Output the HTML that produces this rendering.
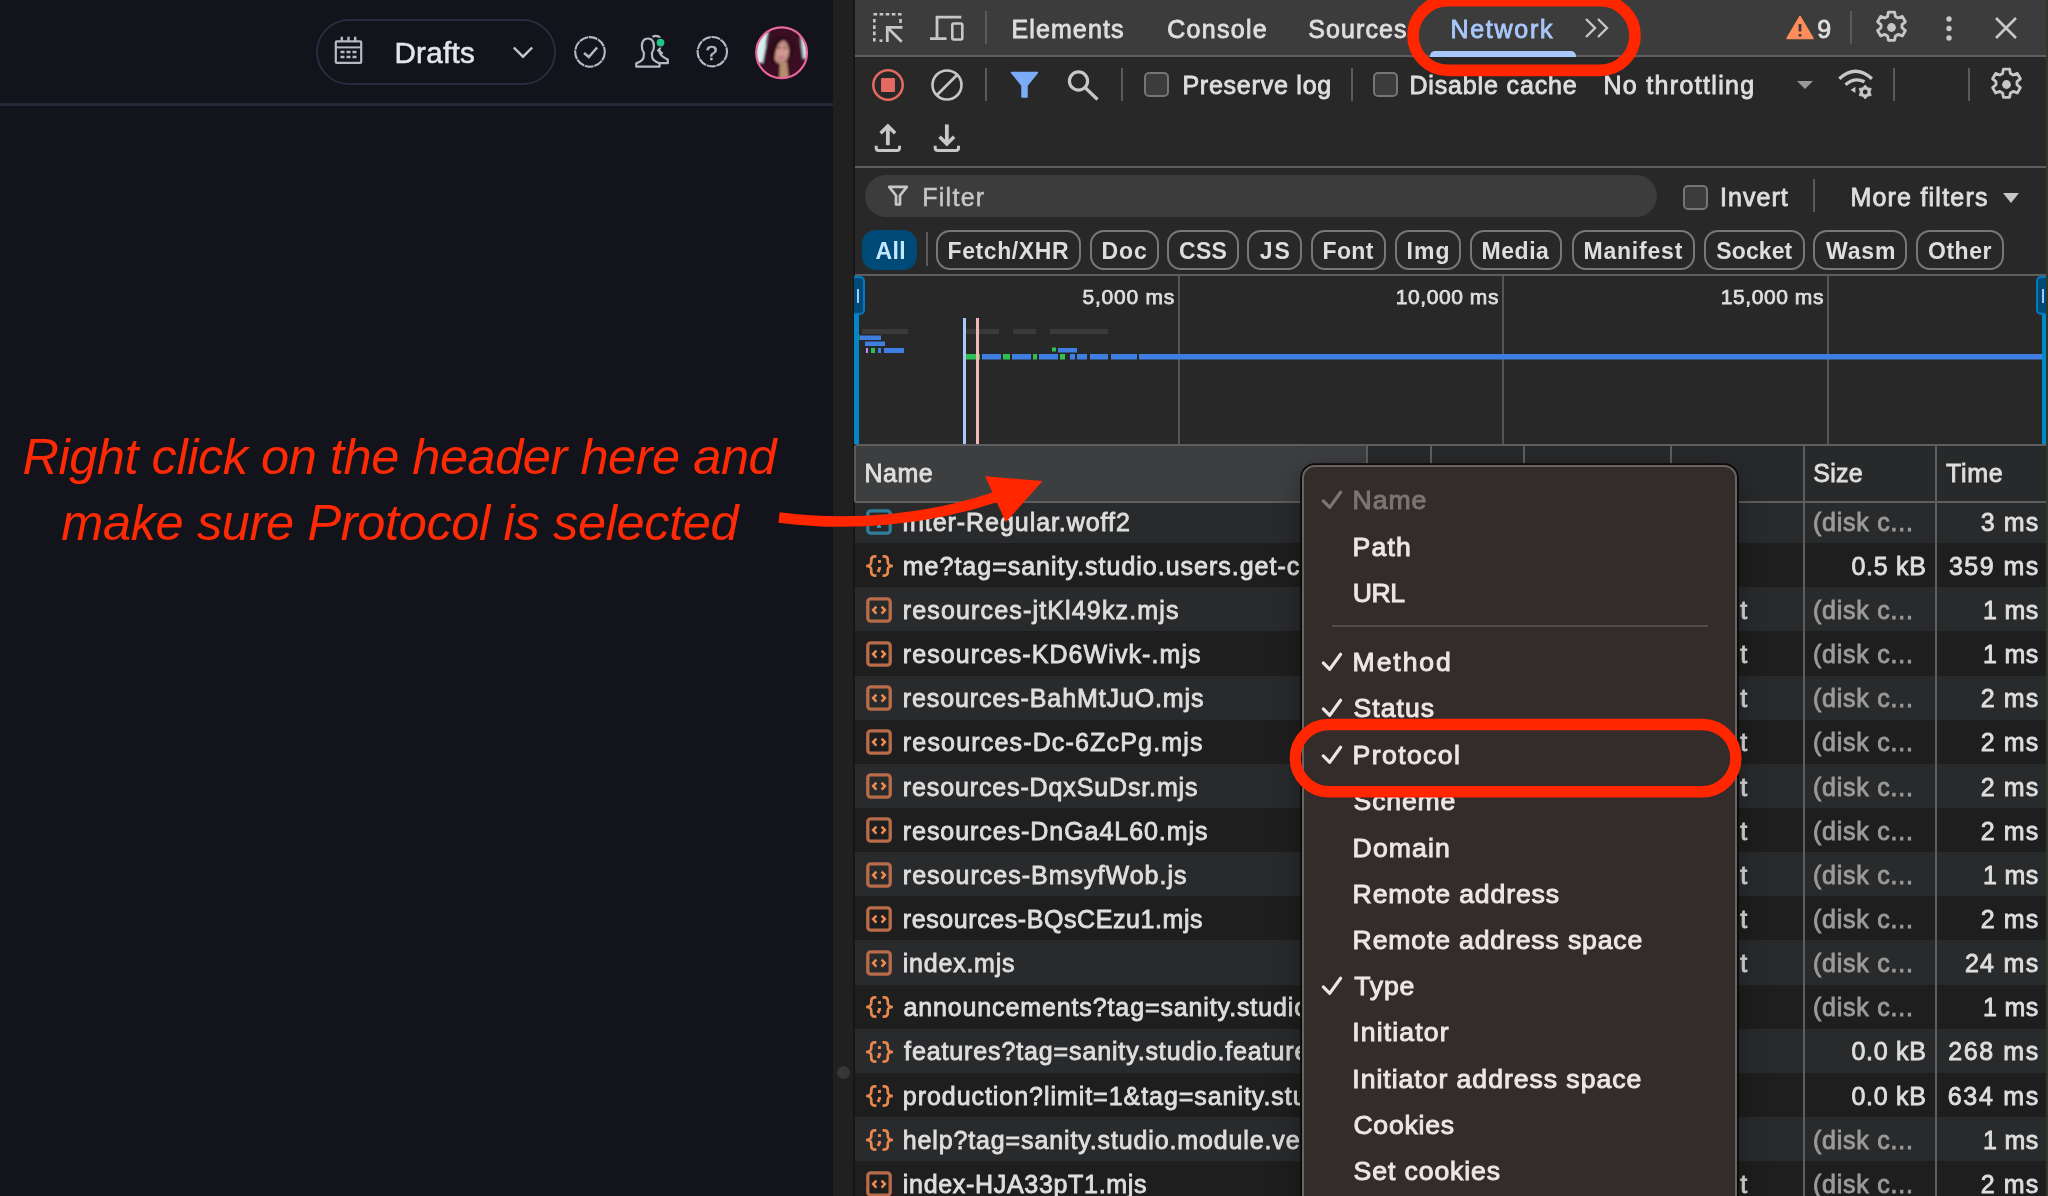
<!DOCTYPE html>
<html lang="en"><head><meta charset="utf-8"><title>Network panel - Protocol column</title>
<style>
html,body{margin:0;padding:0;background:#13141b;}
body{width:2048px;height:1196px;position:relative;overflow:hidden;font-family:"Liberation Sans",sans-serif;-webkit-font-smoothing:antialiased;}
.t{position:absolute;white-space:nowrap;}
.a{position:absolute;}
svg{position:absolute;overflow:visible;}
#root{position:absolute;left:0;top:0;width:2048px;height:1196px;will-change:transform;}

</style></head><body>
<div id="root">
<div class="a" id="page" style="left:0;top:0;width:833px;height:1196px;background:#13141b"></div>
<div class="a" style="left:0;top:103px;width:833px;height:3px;background:#26283a"></div>
<div class="a" style="left:316px;top:19px;width:236px;height:62px;border:2px solid #282c3f;border-radius:34px"></div>
<svg style="left:333px;top:35px" width="31" height="31" viewBox="0 0 31 31" fill="none" stroke="#b6b8c6" stroke-width="2.200">
<rect x="2.800" y="6.300" width="25.400" height="21.600" rx="1"/><path d="M2.800 12.400h25.400" stroke-width="2"/><path d="M8.800 1.800v5M15.500 1.800v5M22.200 1.800v5" stroke-width="2.400"/>
<path d="M7.500 17h16" stroke-width="2.400" stroke-dasharray="4 2"/><path d="M7.500 22h16" stroke-width="2.400" stroke-dasharray="4 2"/></svg>
<span class="t " style="left:394.4px;top:31.8px;font-size:29.5px;line-height:41px;color:#e4e5ec;letter-spacing:0.352px;-webkit-text-stroke:0.550px;">Drafts</span>
<svg style="left:511px;top:44px" width="24" height="16" viewBox="0 0 24 16" fill="none" stroke="#c4c5cf" stroke-width="2.400"><path d="M2.800 3.500l9.200 9.200 9.200-9.200"/></svg>
<svg style="left:573px;top:35px" width="34" height="34" viewBox="0 0 34 34" fill="none" stroke="#b6b8c6" stroke-width="2.100">
<circle cx="17" cy="16.900" r="14.800" stroke-dasharray="9 0.700"/><path d="M11 18l4.800 4 8.300-9.500" stroke-width="2.500"/></svg>
<svg style="left:630px;top:30px" width="44" height="44" viewBox="0 0 44 44" fill="none" stroke="#b6b8c6" stroke-width="2.200" stroke-linejoin="round">
<path d="M6.200 36.600h23.400v-3.200c-5-1.800-7.600-3.600-7.600-7.400v-3.500c1.300-1.300 1.900-3.400 1.900-6.200c0-5.200-2.100-7.800-6-7.800s-6 2.600-6 7.800c0 2.800.6 4.900 1.900 6.200v3.500c0 3.800-2.600 5.600-7.600 7.400z"/>
<path d="M22.500 6.800c1-.7 2.100-1 3.300-1c3.500 0 5.500 2.600 5.500 7.300c0 2.700-.7 4.800-1.900 6.300l.2 2.800c1 3.400 3.700 5.300 8.200 7.200v3.800h-8"/>
<path d="M27.500 19.500l5 4.500" stroke-width="2.600"/>
<circle cx="30.500" cy="12.600" r="4.500" fill="#20c486" stroke="#13141b" stroke-width="1.200"/></svg>
<svg style="left:695px;top:35px" width="34" height="34" viewBox="0 0 34 34" fill="none" stroke="#b6b8c6" stroke-width="2.100">
<circle cx="17.300" cy="16.700" r="14.700" stroke-dasharray="9 0.700"/></svg>
<span class="t " style="left:705.7px;top:37.7px;font-size:21px;line-height:29px;color:#b6b8c6;-webkit-text-stroke:0.5px;">?</span>
<svg style="left:754px;top:25px" width="56" height="56" viewBox="0 0 56 56">
<defs><clipPath id="av"><circle cx="27.600" cy="27.800" r="25"/></clipPath>
<linearGradient id="sk" x1="0" y1="0" x2="0" y2="1"><stop offset="0" stop-color="#b58079"/><stop offset="0.550" stop-color="#d29c90"/><stop offset="1" stop-color="#b5857a"/></linearGradient>
<filter id="bl" x="-20%" y="-20%" width="140%" height="140%"><feGaussianBlur stdDeviation="1.100"/></filter></defs>
<g clip-path="url(#av)"><rect width="56" height="56" fill="#35101f"/><g filter="url(#bl)">
<path d="M0 6h15l-2.500 10l-1.500 14l-2 8H0z" fill="#d5eef0"/><path d="M46 10h10v24h-7l-1.500-12z" fill="#c4e3e6"/>
<path d="M10 56c-3-14 0-30 5-42c3-8 18-12 26-4c8 8 8 30 6 46z" fill="#3a1123"/>
<ellipse cx="26.800" cy="26.500" rx="8.200" ry="12.300" fill="url(#sk)"/>
<path d="M16 22c1-10 12-13 21-8c-5 0-10 1-12.500 5c-3 5-4 12-4.500 24c-3.500-7-5-14-4-21z" fill="#2c0b19"/>
<path d="M35 17c3 4 3.500 12 .5 22c4.500-4 6.500-15 3.500-23z" fill="#2c0b19"/>
<path d="M23.500 23h3M29.500 23h3" stroke="#6a4a55" stroke-width="1.600"/>
<path d="M24.500 32.500h5.500" stroke="#c96f7c" stroke-width="2.200"/>
<path d="M26 38l7-1l2 20H25z" fill="#b88c6e"/></g>
</g><circle cx="27.600" cy="27.800" r="25.400" fill="none" stroke="#e8679b" stroke-width="2.200"/></svg>
<span class="t " style="left:22.4px;top:422.1px;font-size:50.5px;line-height:70px;color:#ff2a05;letter-spacing:-0.454px;font-style:italic;">Right click on the header here and</span>
<span class="t " style="left:61.2px;top:488.1px;font-size:50.5px;line-height:70px;color:#ff2a05;letter-spacing:-0.351px;font-style:italic;">make sure Protocol is selected</span>
<div class="a" style="left:833px;top:0;width:20px;height:1196px;background:#202020"></div>
<div class="a" style="left:853px;top:0;width:2px;height:1196px;background:#161616"></div>
<div class="a" style="left:837px;top:1066px;width:13px;height:13px;border-radius:7px;background:#363636"></div>
<div class="a" id="dt" style="left:855px;top:0;width:1193px;height:1196px;background:#282828"></div>
<div class="a" style="left:855px;top:0;width:1193px;height:55px;background:#3c3c3c"></div>
<div class="a" style="left:855px;top:55px;width:1193px;height:2px;background:#5e5e5e"></div>
<svg style="left:872px;top:12px" width="32" height="32" viewBox="0 0 32 32" fill="none" stroke="#c7c7c7" stroke-width="2.600">
<path d="M1.500 2.300h28" stroke-dasharray="3.600 2.500"/><path d="M2.300 7v23" stroke-dasharray="3.600 2.700"/><path d="M28.500 7v4" /><path d="M7.500 28.700h3"/>
<path d="M15.300 30V15.300H30.400M16 16l13.700 13.700" stroke-width="2.800"/></svg>
<svg style="left:929px;top:14px" width="36" height="28" viewBox="0 0 36 28" fill="none" stroke="#c7c7c7" stroke-width="2.600">
<path d="M32.300 3.200H8v21M1 24.600h16.500" stroke-width="2.800"/><rect x="23.300" y="9.500" width="10" height="16" rx="1.500"/></svg>
<div class="a" style="left:985px;top:11px;width:2px;height:33px;background:#5a5a5a"></div>
<span class="t " style="left:1011.4px;top:12.3px;font-size:25px;line-height:35px;color:#dedede;letter-spacing:1.128px;-webkit-text-stroke:0.85px;">Elements</span>
<span class="t " style="left:1167.2px;top:12.3px;font-size:25px;line-height:35px;color:#dedede;letter-spacing:1.301px;-webkit-text-stroke:0.85px;">Console</span>
<span class="t " style="left:1308.3px;top:12.3px;font-size:25px;line-height:35px;color:#dedede;letter-spacing:1.080px;-webkit-text-stroke:0.85px;">Sources</span>
<span class="t " style="left:1450.4px;top:12.3px;font-size:25px;line-height:35px;color:#a8c7fa;letter-spacing:1.746px;-webkit-text-stroke:0.85px;">Network</span>
<div class="a" style="left:1430px;top:51px;width:146px;height:6px;background:#a8c7fa;border-radius:5px 5px 0 0"></div>
<svg style="left:1584px;top:17px" width="26" height="22" viewBox="0 0 26 22" fill="none" stroke="#c7c7c7" stroke-width="2.400"><path d="M2 2l9 9-9 9M14 2l9 9-9 9"/></svg>
<svg style="left:1786px;top:15px" width="28" height="25" viewBox="0 0 28 25"><path d="M14 1.500L27 23.500H1z" fill="#ff8d5b" stroke="#ff8d5b" stroke-width="1.500" stroke-linejoin="round"/><path d="M14 9v7.500M14 19v2.500" stroke="#3c3c3c" stroke-width="2.800"/></svg>
<span class="t " style="left:1817.3px;top:12.3px;font-size:25px;line-height:35px;color:#dedede;-webkit-text-stroke:0.85px;">9</span>
<div class="a" style="left:1850px;top:11px;width:2px;height:33px;background:#5a5a5a"></div>
<svg style="left:1871.5px;top:8.3px" width="39" height="39" viewBox="0 0 24 24" fill="none" stroke="#c7c7c7" stroke-width="1.750" stroke-linejoin="round">
<path d="M10.100 2.500h3.800l.5 2.700 1.700.95 2.550-.95 1.900 3.300-2.100 1.750v1.900l2.100 1.750-1.900 3.300-2.550-.95-1.700.95-.5 2.700h-3.800l-.5-2.700-1.700-.95-2.550.95-1.900-3.300 2.100-1.750v-1.900l-2.100-1.750 1.900-3.300 2.550.95 1.700-.95z"/><circle cx="12" cy="12" r="2.700" fill="#c7c7c7" stroke="none"/></svg>
<svg style="left:1944px;top:14px" width="10" height="30" viewBox="0 0 10 30" fill="#c7c7c7"><circle cx="5" cy="5" r="2.700"/><circle cx="5" cy="14.500" r="2.700"/><circle cx="5" cy="24" r="2.700"/></svg>
<svg style="left:1994px;top:16px" width="24" height="24" viewBox="0 0 24 24" fill="none" stroke="#c7c7c7" stroke-width="2.600"><path d="M2 2l20 20M22 2L2 22"/></svg>
<svg style="left:871px;top:68px" width="34" height="34" viewBox="0 0 34 34"><circle cx="17" cy="17" r="14.700" fill="none" stroke="#e46962" stroke-width="2.600"/><rect x="10" y="10" width="14" height="14" rx="1" fill="#e46962"/></svg>
<svg style="left:930px;top:68px" width="34" height="34" viewBox="0 0 34 34" fill="none" stroke="#c7c7c7" stroke-width="2.600"><circle cx="17" cy="17" r="14.500"/><path d="M7 27L27 7"/></svg>
<div class="a" style="left:985px;top:68px;width:2px;height:33px;background:#5a5a5a"></div>
<svg style="left:1010px;top:71px" width="29" height="28" viewBox="0 0 29 28"><path d="M1.500 1.500h26l-10.500 13v11.500h-5v-11.500z" fill="#7cacf8" stroke="#7cacf8" stroke-width="1.500" stroke-linejoin="round"/></svg>
<svg style="left:1066px;top:69px" width="34" height="32" viewBox="0 0 34 32" fill="none" stroke="#c7c7c7" stroke-width="3.200"><circle cx="12.500" cy="12" r="9.100"/><path d="M19.500 19l12 11.500"/></svg>
<div class="a" style="left:1121px;top:68px;width:2px;height:33px;background:#5a5a5a"></div>
<div class="a" style="left:1144px;top:72px;width:21px;height:21px;border:2px solid #757575;border-radius:5px;background:#3c3c3c"></div>
<span class="t " style="left:1182.4px;top:68.3px;font-size:25px;line-height:35px;color:#dedede;letter-spacing:0.770px;-webkit-text-stroke:0.85px;">Preserve log</span>
<div class="a" style="left:1351px;top:68px;width:2px;height:33px;background:#5a5a5a"></div>
<div class="a" style="left:1373px;top:72px;width:21px;height:21px;border:2px solid #757575;border-radius:5px;background:#3c3c3c"></div>
<span class="t " style="left:1409.4px;top:68.3px;font-size:25px;line-height:35px;color:#dedede;letter-spacing:0.857px;-webkit-text-stroke:0.85px;">Disable cache</span>
<span class="t " style="left:1603.4px;top:68.3px;font-size:25px;line-height:35px;color:#dedede;letter-spacing:1.336px;-webkit-text-stroke:0.85px;">No throttling</span>
<svg style="left:1796px;top:80px" width="18" height="10" viewBox="0 0 18 10"><path d="M1 1h16l-8 8z" fill="#9a9a9a"/></svg>
<svg style="left:1837px;top:67px" width="38" height="34" viewBox="0 0 38 34" fill="none" stroke="#c7c7c7" stroke-width="3.200">
<path d="M2.300 11.800Q18.600 -3.200 34.900 11.800"/><path d="M8.500 17.800Q17.500 9.800 27.500 14.800"/>
<path d="M13.600 22.900l4.800-3.100v6.200z" fill="#c7c7c7" stroke="none"/>
<path d="M28.20 18.00L30.65 20.76L34.26 21.50L33.10 25.00L34.26 28.50L30.65 29.24L28.20 32.00L25.75 29.24L22.14 28.50L23.30 25.00L22.14 21.50L25.75 20.76Z" fill="#c7c7c7" stroke="#c7c7c7" stroke-width="0.800" stroke-linejoin="round"/><circle cx="28.2" cy="25.0" r="2.400" fill="#282828" stroke="none"/></svg>
<div class="a" style="left:1893px;top:68px;width:2px;height:33px;background:#5a5a5a"></div>
<div class="a" style="left:1968px;top:68px;width:2px;height:33px;background:#5a5a5a"></div>
<svg style="left:1987.0px;top:65.3px" width="39" height="39" viewBox="0 0 24 24" fill="none" stroke="#c7c7c7" stroke-width="1.750" stroke-linejoin="round">
<path d="M10.100 2.500h3.800l.5 2.700 1.700.95 2.550-.95 1.900 3.300-2.100 1.750v1.900l2.100 1.750-1.900 3.300-2.550-.95-1.700.95-.5 2.700h-3.800l-.5-2.700-1.700-.95-2.550.95-1.900-3.300 2.100-1.750v-1.900l-2.100-1.750 1.900-3.300 2.550.95 1.700-.95z"/><circle cx="12" cy="12" r="2.700" fill="#c7c7c7" stroke="none"/></svg>
<svg style="left:873px;top:122px" width="30" height="32" viewBox="0 0 30 32" fill="none" stroke="#c7c7c7" stroke-width="3"><path d="M3.200 23.700v2.200q0 2.500 2.500 2.500h18.300q2.500 0 2.500-2.500v-2.200"/><path d="M14.850 23.200V5.500" stroke-width="3.800"/><path d="M7.600 11.300l7.250-7.250 7.250 7.250" stroke-width="3.600"/></svg>
<svg style="left:932px;top:122px" width="30" height="32" viewBox="0 0 30 32" fill="none" stroke="#c7c7c7" stroke-width="3"><path d="M3.200 23.700v2.200q0 2.500 2.500 2.500h18.300q2.500 0 2.500-2.500v-2.200"/><path d="M14.850 2.400V20.500" stroke-width="3.800"/><path d="M7.600 14.700l7.250 7.250 7.250-7.250" stroke-width="3.600"/></svg>
<div class="a" style="left:855px;top:166px;width:1193px;height:2px;background:#5e5e5e"></div>
<div class="a" style="left:865px;top:175px;width:792px;height:42px;border-radius:21px;background:#3c3c3c"></div>
<svg style="left:887px;top:184px" width="22" height="23" viewBox="0 0 22 23" fill="none" stroke="#c7c7c7" stroke-width="2.700" stroke-linejoin="round"><path d="M2.200 2.800h17.600l-6.800 8.700v9h-4v-9z" /></svg>
<span class="t " style="left:922.2px;top:180.3px;font-size:25px;line-height:35px;color:#c7c7c7;letter-spacing:1.283px;-webkit-text-stroke:0.5px;">Filter</span>
<div class="a" style="left:1683px;top:185px;width:21px;height:21px;border:2px solid #757575;border-radius:5px;background:#3c3c3c"></div>
<span class="t " style="left:1720.1px;top:180.3px;font-size:25px;line-height:35px;color:#dedede;letter-spacing:1.024px;-webkit-text-stroke:0.85px;">Invert</span>
<div class="a" style="left:1813px;top:179px;width:2px;height:33px;background:#5a5a5a"></div>
<span class="t " style="left:1850.4px;top:180.3px;font-size:25px;line-height:35px;color:#dedede;letter-spacing:1.225px;-webkit-text-stroke:0.85px;">More filters</span>
<svg style="left:2002px;top:192px" width="18" height="12" viewBox="0 0 18 12"><path d="M1 1h16l-8 10z" fill="#c7c7c7"/></svg>
<div class="a" style="left:862px;top:230px;width:55px;height:40px;border-radius:14px;background:#004a77"></div>
<span class="t " style="left:875.4px;top:235.3px;font-size:23px;line-height:32px;color:#c2e7ff;letter-spacing:0.405px;font-weight:700;">All</span>
<div class="a" style="left:936px;top:230px;width:141px;height:36px;border-radius:14px;border:2px solid #787878"></div>
<span class="t " style="left:947.5px;top:235.3px;font-size:23px;line-height:32px;color:#dedede;letter-spacing:0.590px;font-weight:700;">Fetch/XHR</span>
<div class="a" style="left:1090px;top:230px;width:65px;height:36px;border-radius:14px;border:2px solid #787878"></div>
<span class="t " style="left:1101.5px;top:235.3px;font-size:23px;line-height:32px;color:#dedede;letter-spacing:0.880px;font-weight:700;">Doc</span>
<div class="a" style="left:1167px;top:230px;width:68px;height:36px;border-radius:14px;border:2px solid #787878"></div>
<span class="t " style="left:1179.1px;top:235.3px;font-size:23px;line-height:32px;color:#dedede;letter-spacing:0.276px;font-weight:700;">CSS</span>
<div class="a" style="left:1247px;top:230px;width:51px;height:36px;border-radius:14px;border:2px solid #787878"></div>
<span class="t " style="left:1259.7px;top:235.3px;font-size:23px;line-height:32px;color:#dedede;letter-spacing:2.114px;font-weight:700;">JS</span>
<div class="a" style="left:1311px;top:230px;width:71px;height:36px;border-radius:14px;border:2px solid #787878"></div>
<span class="t " style="left:1322.5px;top:235.3px;font-size:23px;line-height:32px;color:#dedede;letter-spacing:0.337px;font-weight:700;">Font</span>
<div class="a" style="left:1395px;top:230px;width:62px;height:36px;border-radius:14px;border:2px solid #787878"></div>
<span class="t " style="left:1406.5px;top:235.3px;font-size:23px;line-height:32px;color:#dedede;letter-spacing:1.093px;font-weight:700;">Img</span>
<div class="a" style="left:1470px;top:230px;width:88px;height:36px;border-radius:14px;border:2px solid #787878"></div>
<span class="t " style="left:1481.5px;top:235.3px;font-size:23px;line-height:32px;color:#dedede;letter-spacing:0.552px;font-weight:700;">Media</span>
<div class="a" style="left:1572px;top:230px;width:119px;height:36px;border-radius:14px;border:2px solid #787878"></div>
<span class="t " style="left:1583.5px;top:235.3px;font-size:23px;line-height:32px;color:#dedede;letter-spacing:0.789px;font-weight:700;">Manifest</span>
<div class="a" style="left:1704px;top:230px;width:97px;height:36px;border-radius:14px;border:2px solid #787878"></div>
<span class="t " style="left:1716.3px;top:235.3px;font-size:23px;line-height:32px;color:#dedede;letter-spacing:0.103px;font-weight:700;">Socket</span>
<div class="a" style="left:1813px;top:230px;width:90px;height:36px;border-radius:14px;border:2px solid #787878"></div>
<span class="t " style="left:1826.0px;top:235.3px;font-size:23px;line-height:32px;color:#dedede;letter-spacing:0.853px;font-weight:700;">Wasm</span>
<div class="a" style="left:1916px;top:230px;width:84px;height:36px;border-radius:14px;border:2px solid #787878"></div>
<span class="t " style="left:1928.1px;top:235.3px;font-size:23px;line-height:32px;color:#dedede;letter-spacing:0.487px;font-weight:700;">Other</span>
<div class="a" style="left:926px;top:232px;width:2px;height:34px;background:#5a5a5a"></div>
<div class="a" style="left:855px;top:274px;width:1193px;height:2px;background:#5e5e5e"></div>
<div class="a" style="left:855px;top:276px;width:1193px;height:168px;background:#282828"></div>
<div class="a" style="left:1178px;top:276px;width:2px;height:168px;background:#555555"></div>
<div class="a" style="left:1502px;top:276px;width:2px;height:168px;background:#555555"></div>
<div class="a" style="left:1827px;top:276px;width:2px;height:168px;background:#555555"></div>
<span class="t " style="left:1082.5px;top:282.2px;font-size:21px;line-height:29px;color:#dedede;letter-spacing:0.781px;-webkit-text-stroke:0.75px;">5,000 ms</span>
<span class="t " style="left:1395.8px;top:282.2px;font-size:21px;line-height:29px;color:#dedede;letter-spacing:0.568px;-webkit-text-stroke:0.75px;">10,000 ms</span>
<span class="t " style="left:1720.8px;top:282.2px;font-size:21px;line-height:29px;color:#dedede;letter-spacing:0.568px;-webkit-text-stroke:0.75px;">15,000 ms</span>
<svg style="left:855px;top:276px" width="1193" height="168" viewBox="0 0 1193 168"><rect x="7.0" y="53.0" width="46.0" height="5.0" fill="#3a3a3a"/><rect x="111.0" y="53.0" width="33.0" height="5.0" fill="#3a3a3a"/><rect x="158.0" y="53.0" width="23.0" height="5.0" fill="#3a3a3a"/><rect x="195.0" y="53.0" width="58.0" height="5.0" fill="#3a3a3a"/><rect x="5.0" y="59.5" width="21.0" height="4.5" fill="#3f7fe2"/><rect x="3.0" y="59.0" width="2.0" height="5.0" fill="#2fbf55" opacity="0.6"/><rect x="10.0" y="65.5" width="20.0" height="4.5" fill="#3f7fe2"/><rect x="11.0" y="72.0" width="2.0" height="5.0" fill="#c58af9"/><rect x="16.0" y="72.0" width="4.0" height="5.0" fill="#2fbf55"/><rect x="23.0" y="72.0" width="3.0" height="5.0" fill="#3f7fe2"/><rect x="29.0" y="72.0" width="20.0" height="5.0" fill="#3f7fe2"/><rect x="197.0" y="71.5" width="4.0" height="4.0" fill="#2fbf55"/><rect x="203.0" y="72.0" width="19.0" height="4.5" fill="#3f7fe2"/><rect x="110.0" y="78.0" width="15.0" height="5.5" fill="#2fbf55"/><rect x="127.0" y="78.0" width="19.0" height="5.5" fill="#3f7fe2"/><rect x="148.0" y="78.0" width="7.0" height="5.5" fill="#2fbf55"/><rect x="157.0" y="78.0" width="19.0" height="5.5" fill="#3f7fe2"/><rect x="178.0" y="78.0" width="4.0" height="5.5" fill="#2fbf55"/><rect x="184.0" y="78.0" width="19.0" height="5.5" fill="#3f7fe2"/><rect x="205.0" y="78.0" width="5.0" height="5.5" fill="#2fbf55"/><rect x="215.0" y="78.0" width="5.0" height="5.5" fill="#3f7fe2"/><rect x="222.0" y="78.0" width="10.0" height="5.5" fill="#3f7fe2"/><rect x="235.0" y="78.0" width="18.0" height="5.5" fill="#3f7fe2"/><rect x="256.0" y="78.0" width="26.0" height="5.5" fill="#3f7fe2"/><rect x="284.0" y="78.0" width="905.0" height="5.5" fill="#3f7fe2"/></svg>
<div class="a" style="left:963px;top:318px;width:3px;height:126px;background:#a8c7fa"></div>
<div class="a" style="left:976px;top:318px;width:3px;height:126px;background:#f2b8b5"></div>
<div class="a" style="left:854px;top:276px;width:5px;height:168px;background:#0288c8"></div>
<div class="a" style="left:854px;top:274px;width:14px;height:44px;overflow:hidden"><div class="a" style="left:-3px;top:2px;width:10px;height:35px;background:#004a77;border:2px solid #0079bd;border-radius:5px"></div></div>
<div class="a" style="left:857px;top:289px;width:2px;height:14px;background:#a8c7fa"></div>
<div class="a" style="left:2042px;top:276px;width:4px;height:168px;background:#0288c8"></div>
<div class="a" style="left:2036px;top:276px;width:11px;height:35px;background:#004a77;border:2px solid #0079bd;border-radius:5px"></div>
<div class="a" style="left:2042px;top:289px;width:2px;height:14px;background:#a8c7fa"></div>
<div class="a" style="left:855px;top:444px;width:1193px;height:2px;background:#5e5e5e"></div>
<div class="a" style="left:855px;top:499px;width:1193px;height:45px;background:#292a2c"></div>
<svg style="left:866.400px;top:508.5px" width="26" height="26" viewBox="0 0 26 26" fill="none" stroke="#2f7f9b" stroke-width="3.300"><rect x="1.800" y="1.800" width="22.400" height="22.400" rx="3"/><path d="M8.500 9.500V8.300h9v1.200M13 8.300v9.500M11 17.800h4" stroke="#3fa7c9" stroke-width="2"/></svg>
<span class="t " style="left:1680.1px;top:504.8px;font-size:25px;line-height:35px;color:#dedede;-webkit-text-stroke:0.85px;">font</span>
<span class="t " style="left:1812.9px;top:504.8px;font-size:25px;line-height:35px;color:#9a9a9a;letter-spacing:0.769px;-webkit-text-stroke:0.85px;">(disk c...</span>
<span class="t " style="left:1980.7px;top:504.8px;font-size:25px;line-height:35px;color:#dedede;letter-spacing:1.111px;-webkit-text-stroke:0.85px;">3 ms</span>
<div class="a" style="left:855px;top:543px;width:1193px;height:45px;background:#1e1e1e"></div>
<svg style="left:863.900px;top:553.1px" width="31" height="26" viewBox="0 0 30 26" preserveAspectRatio="none" fill="none" stroke="#e8874f" stroke-width="2.600"><path d="M12 3.400h-1.500q-3.500 0-3.500 3.500v2.400q0 3.700-5 3.700q5 0 5 3.700v2.400q0 3.500 3.500 3.500h1.500M18 3.400h1.500q3.500 0 3.500 3.500v2.400q0 3.700 5 3.700q-5 0-5 3.700v2.400q0 3.500-3.500 3.500h-1.500"/><path d="M15 7v3M15 14v2l-1.500 3" stroke-width="2.800"/></svg>
<span class="t " style="left:1680.1px;top:548.9px;font-size:25px;line-height:35px;color:#dedede;-webkit-text-stroke:0.85px;">fetch</span>
<span class="t " style="left:1851.4px;top:548.9px;font-size:25px;line-height:35px;color:#dedede;letter-spacing:0.715px;-webkit-text-stroke:0.85px;">0.5 kB</span>
<span class="t " style="left:1948.9px;top:548.9px;font-size:25px;line-height:35px;color:#dedede;letter-spacing:1.465px;-webkit-text-stroke:0.85px;">359 ms</span>
<div class="a" style="left:855px;top:587px;width:1193px;height:45px;background:#292a2c"></div>
<svg style="left:866.400px;top:596.8px" width="26" height="26" viewBox="0 0 26 26" fill="none" stroke="#b96c4a" stroke-width="3.300"><rect x="1.800" y="1.800" width="22.400" height="22.400" rx="3"/><path d="M10.400 9.600l-3.300 3.500 3.300 3.500M15.600 9.600l3.300 3.500-3.300 3.500" stroke="#ee8a52" stroke-width="2.500"/></svg>
<span class="t " style="left:1679.7px;top:593.0px;font-size:25px;line-height:35px;color:#dedede;letter-spacing:1.560px;-webkit-text-stroke:0.85px;">script</span>
<span class="t " style="left:1812.9px;top:593.0px;font-size:25px;line-height:35px;color:#9a9a9a;letter-spacing:0.769px;-webkit-text-stroke:0.85px;">(disk c...</span>
<span class="t " style="left:1983.0px;top:593.0px;font-size:25px;line-height:35px;color:#dedede;letter-spacing:0.328px;-webkit-text-stroke:0.85px;">1 ms</span>
<div class="a" style="left:855px;top:631px;width:1193px;height:45px;background:#1e1e1e"></div>
<svg style="left:866.400px;top:640.9px" width="26" height="26" viewBox="0 0 26 26" fill="none" stroke="#b96c4a" stroke-width="3.300"><rect x="1.800" y="1.800" width="22.400" height="22.400" rx="3"/><path d="M10.400 9.600l-3.300 3.500 3.300 3.500M15.600 9.600l3.300 3.500-3.300 3.500" stroke="#ee8a52" stroke-width="2.500"/></svg>
<span class="t " style="left:1679.7px;top:637.2px;font-size:25px;line-height:35px;color:#dedede;letter-spacing:1.560px;-webkit-text-stroke:0.85px;">script</span>
<span class="t " style="left:1812.9px;top:637.2px;font-size:25px;line-height:35px;color:#9a9a9a;letter-spacing:0.769px;-webkit-text-stroke:0.85px;">(disk c...</span>
<span class="t " style="left:1983.0px;top:637.2px;font-size:25px;line-height:35px;color:#dedede;letter-spacing:0.328px;-webkit-text-stroke:0.85px;">1 ms</span>
<div class="a" style="left:855px;top:676px;width:1193px;height:45px;background:#292a2c"></div>
<svg style="left:866.400px;top:685.0px" width="26" height="26" viewBox="0 0 26 26" fill="none" stroke="#b96c4a" stroke-width="3.300"><rect x="1.800" y="1.800" width="22.400" height="22.400" rx="3"/><path d="M10.400 9.600l-3.300 3.500 3.300 3.500M15.600 9.600l3.300 3.500-3.300 3.500" stroke="#ee8a52" stroke-width="2.500"/></svg>
<span class="t " style="left:1679.7px;top:681.3px;font-size:25px;line-height:35px;color:#dedede;letter-spacing:1.560px;-webkit-text-stroke:0.85px;">script</span>
<span class="t " style="left:1812.9px;top:681.3px;font-size:25px;line-height:35px;color:#9a9a9a;letter-spacing:0.769px;-webkit-text-stroke:0.85px;">(disk c...</span>
<span class="t " style="left:1980.7px;top:681.3px;font-size:25px;line-height:35px;color:#dedede;letter-spacing:1.112px;-webkit-text-stroke:0.85px;">2 ms</span>
<div class="a" style="left:855px;top:720px;width:1193px;height:45px;background:#1e1e1e"></div>
<svg style="left:866.400px;top:729.1px" width="26" height="26" viewBox="0 0 26 26" fill="none" stroke="#b96c4a" stroke-width="3.300"><rect x="1.800" y="1.800" width="22.400" height="22.400" rx="3"/><path d="M10.400 9.600l-3.300 3.500 3.300 3.500M15.600 9.600l3.300 3.500-3.300 3.500" stroke="#ee8a52" stroke-width="2.500"/></svg>
<span class="t " style="left:1679.7px;top:725.4px;font-size:25px;line-height:35px;color:#dedede;letter-spacing:1.560px;-webkit-text-stroke:0.85px;">script</span>
<span class="t " style="left:1812.9px;top:725.4px;font-size:25px;line-height:35px;color:#9a9a9a;letter-spacing:0.769px;-webkit-text-stroke:0.85px;">(disk c...</span>
<span class="t " style="left:1980.7px;top:725.4px;font-size:25px;line-height:35px;color:#dedede;letter-spacing:1.112px;-webkit-text-stroke:0.85px;">2 ms</span>
<div class="a" style="left:855px;top:764px;width:1193px;height:45px;background:#292a2c"></div>
<svg style="left:866.400px;top:773.3px" width="26" height="26" viewBox="0 0 26 26" fill="none" stroke="#b96c4a" stroke-width="3.300"><rect x="1.800" y="1.800" width="22.400" height="22.400" rx="3"/><path d="M10.400 9.600l-3.300 3.500 3.300 3.500M15.600 9.600l3.300 3.500-3.300 3.500" stroke="#ee8a52" stroke-width="2.500"/></svg>
<span class="t " style="left:1679.7px;top:769.6px;font-size:25px;line-height:35px;color:#dedede;letter-spacing:1.560px;-webkit-text-stroke:0.85px;">script</span>
<span class="t " style="left:1812.9px;top:769.6px;font-size:25px;line-height:35px;color:#9a9a9a;letter-spacing:0.769px;-webkit-text-stroke:0.85px;">(disk c...</span>
<span class="t " style="left:1980.7px;top:769.6px;font-size:25px;line-height:35px;color:#dedede;letter-spacing:1.112px;-webkit-text-stroke:0.85px;">2 ms</span>
<div class="a" style="left:855px;top:808px;width:1193px;height:45px;background:#1e1e1e"></div>
<svg style="left:866.400px;top:817.4px" width="26" height="26" viewBox="0 0 26 26" fill="none" stroke="#b96c4a" stroke-width="3.300"><rect x="1.800" y="1.800" width="22.400" height="22.400" rx="3"/><path d="M10.400 9.600l-3.300 3.500 3.300 3.500M15.600 9.600l3.300 3.500-3.300 3.500" stroke="#ee8a52" stroke-width="2.500"/></svg>
<span class="t " style="left:1679.7px;top:813.7px;font-size:25px;line-height:35px;color:#dedede;letter-spacing:1.560px;-webkit-text-stroke:0.85px;">script</span>
<span class="t " style="left:1812.9px;top:813.7px;font-size:25px;line-height:35px;color:#9a9a9a;letter-spacing:0.769px;-webkit-text-stroke:0.85px;">(disk c...</span>
<span class="t " style="left:1980.7px;top:813.7px;font-size:25px;line-height:35px;color:#dedede;letter-spacing:1.112px;-webkit-text-stroke:0.85px;">2 ms</span>
<div class="a" style="left:855px;top:852px;width:1193px;height:45px;background:#292a2c"></div>
<svg style="left:866.400px;top:861.5px" width="26" height="26" viewBox="0 0 26 26" fill="none" stroke="#b96c4a" stroke-width="3.300"><rect x="1.800" y="1.800" width="22.400" height="22.400" rx="3"/><path d="M10.400 9.600l-3.300 3.500 3.300 3.500M15.600 9.600l3.300 3.500-3.300 3.500" stroke="#ee8a52" stroke-width="2.500"/></svg>
<span class="t " style="left:1679.7px;top:857.8px;font-size:25px;line-height:35px;color:#dedede;letter-spacing:1.560px;-webkit-text-stroke:0.85px;">script</span>
<span class="t " style="left:1812.9px;top:857.8px;font-size:25px;line-height:35px;color:#9a9a9a;letter-spacing:0.769px;-webkit-text-stroke:0.85px;">(disk c...</span>
<span class="t " style="left:1983.0px;top:857.8px;font-size:25px;line-height:35px;color:#dedede;letter-spacing:0.328px;-webkit-text-stroke:0.85px;">1 ms</span>
<div class="a" style="left:855px;top:896px;width:1193px;height:45px;background:#1e1e1e"></div>
<svg style="left:866.400px;top:905.7px" width="26" height="26" viewBox="0 0 26 26" fill="none" stroke="#b96c4a" stroke-width="3.300"><rect x="1.800" y="1.800" width="22.400" height="22.400" rx="3"/><path d="M10.400 9.600l-3.300 3.500 3.300 3.500M15.600 9.600l3.300 3.500-3.300 3.500" stroke="#ee8a52" stroke-width="2.500"/></svg>
<span class="t " style="left:1679.7px;top:902.0px;font-size:25px;line-height:35px;color:#dedede;letter-spacing:1.560px;-webkit-text-stroke:0.85px;">script</span>
<span class="t " style="left:1812.9px;top:902.0px;font-size:25px;line-height:35px;color:#9a9a9a;letter-spacing:0.769px;-webkit-text-stroke:0.85px;">(disk c...</span>
<span class="t " style="left:1980.7px;top:902.0px;font-size:25px;line-height:35px;color:#dedede;letter-spacing:1.112px;-webkit-text-stroke:0.85px;">2 ms</span>
<div class="a" style="left:855px;top:940px;width:1193px;height:45px;background:#292a2c"></div>
<svg style="left:866.400px;top:949.8px" width="26" height="26" viewBox="0 0 26 26" fill="none" stroke="#b96c4a" stroke-width="3.300"><rect x="1.800" y="1.800" width="22.400" height="22.400" rx="3"/><path d="M10.400 9.600l-3.300 3.500 3.300 3.500M15.600 9.600l3.300 3.500-3.300 3.500" stroke="#ee8a52" stroke-width="2.500"/></svg>
<span class="t " style="left:1679.7px;top:946.1px;font-size:25px;line-height:35px;color:#dedede;letter-spacing:1.560px;-webkit-text-stroke:0.85px;">script</span>
<span class="t " style="left:1812.9px;top:946.1px;font-size:25px;line-height:35px;color:#9a9a9a;letter-spacing:0.769px;-webkit-text-stroke:0.85px;">(disk c...</span>
<span class="t " style="left:1964.9px;top:946.1px;font-size:25px;line-height:35px;color:#dedede;letter-spacing:1.309px;-webkit-text-stroke:0.85px;">24 ms</span>
<div class="a" style="left:855px;top:985px;width:1193px;height:45px;background:#1e1e1e"></div>
<svg style="left:863.900px;top:994.4px" width="31" height="26" viewBox="0 0 30 26" preserveAspectRatio="none" fill="none" stroke="#e8874f" stroke-width="2.600"><path d="M12 3.400h-1.500q-3.500 0-3.500 3.500v2.400q0 3.700-5 3.700q5 0 5 3.700v2.400q0 3.500 3.500 3.500h1.500M18 3.400h1.500q3.500 0 3.500 3.500v2.400q0 3.700 5 3.700q-5 0-5 3.700v2.400q0 3.500-3.500 3.500h-1.500"/><path d="M15 7v3M15 14v2l-1.500 3" stroke-width="2.800"/></svg>
<span class="t " style="left:1680.1px;top:990.2px;font-size:25px;line-height:35px;color:#dedede;-webkit-text-stroke:0.85px;">fetch</span>
<span class="t " style="left:1812.9px;top:990.2px;font-size:25px;line-height:35px;color:#9a9a9a;letter-spacing:0.769px;-webkit-text-stroke:0.85px;">(disk c...</span>
<span class="t " style="left:1983.0px;top:990.2px;font-size:25px;line-height:35px;color:#dedede;letter-spacing:0.328px;-webkit-text-stroke:0.85px;">1 ms</span>
<div class="a" style="left:855px;top:1029px;width:1193px;height:45px;background:#292a2c"></div>
<svg style="left:863.900px;top:1038.6px" width="31" height="26" viewBox="0 0 30 26" preserveAspectRatio="none" fill="none" stroke="#e8874f" stroke-width="2.600"><path d="M12 3.400h-1.500q-3.500 0-3.500 3.500v2.400q0 3.700-5 3.700q5 0 5 3.700v2.400q0 3.500 3.500 3.500h1.500M18 3.400h1.500q3.500 0 3.500 3.500v2.400q0 3.700 5 3.700q-5 0-5 3.700v2.400q0 3.500-3.500 3.500h-1.500"/><path d="M15 7v3M15 14v2l-1.500 3" stroke-width="2.800"/></svg>
<span class="t " style="left:1680.1px;top:1034.3px;font-size:25px;line-height:35px;color:#dedede;-webkit-text-stroke:0.85px;">fetch</span>
<span class="t " style="left:1851.4px;top:1034.3px;font-size:25px;line-height:35px;color:#dedede;letter-spacing:0.715px;-webkit-text-stroke:0.85px;">0.0 kB</span>
<span class="t " style="left:1948.2px;top:1034.3px;font-size:25px;line-height:35px;color:#dedede;letter-spacing:1.606px;-webkit-text-stroke:0.85px;">268 ms</span>
<div class="a" style="left:855px;top:1073px;width:1193px;height:45px;background:#1e1e1e"></div>
<svg style="left:863.900px;top:1082.7px" width="31" height="26" viewBox="0 0 30 26" preserveAspectRatio="none" fill="none" stroke="#e8874f" stroke-width="2.600"><path d="M12 3.400h-1.500q-3.500 0-3.500 3.500v2.400q0 3.700-5 3.700q5 0 5 3.700v2.400q0 3.500 3.500 3.500h1.500M18 3.400h1.500q3.500 0 3.500 3.500v2.400q0 3.700 5 3.700q-5 0-5 3.700v2.400q0 3.500-3.500 3.500h-1.500"/><path d="M15 7v3M15 14v2l-1.500 3" stroke-width="2.800"/></svg>
<span class="t " style="left:1680.1px;top:1078.5px;font-size:25px;line-height:35px;color:#dedede;-webkit-text-stroke:0.85px;">fetch</span>
<span class="t " style="left:1851.4px;top:1078.5px;font-size:25px;line-height:35px;color:#dedede;letter-spacing:0.715px;-webkit-text-stroke:0.85px;">0.0 kB</span>
<span class="t " style="left:1947.7px;top:1078.5px;font-size:25px;line-height:35px;color:#dedede;letter-spacing:1.709px;-webkit-text-stroke:0.85px;">634 ms</span>
<div class="a" style="left:855px;top:1117px;width:1193px;height:45px;background:#292a2c"></div>
<svg style="left:863.900px;top:1126.8px" width="31" height="26" viewBox="0 0 30 26" preserveAspectRatio="none" fill="none" stroke="#e8874f" stroke-width="2.600"><path d="M12 3.400h-1.500q-3.500 0-3.500 3.500v2.400q0 3.700-5 3.700q5 0 5 3.700v2.400q0 3.500 3.500 3.500h1.500M18 3.400h1.500q3.500 0 3.500 3.500v2.400q0 3.700 5 3.700q-5 0-5 3.700v2.400q0 3.500-3.500 3.500h-1.500"/><path d="M15 7v3M15 14v2l-1.500 3" stroke-width="2.800"/></svg>
<span class="t " style="left:1680.1px;top:1122.6px;font-size:25px;line-height:35px;color:#dedede;-webkit-text-stroke:0.85px;">fetch</span>
<span class="t " style="left:1812.9px;top:1122.6px;font-size:25px;line-height:35px;color:#9a9a9a;letter-spacing:0.769px;-webkit-text-stroke:0.85px;">(disk c...</span>
<span class="t " style="left:1983.0px;top:1122.6px;font-size:25px;line-height:35px;color:#dedede;letter-spacing:0.328px;-webkit-text-stroke:0.85px;">1 ms</span>
<div class="a" style="left:855px;top:1161px;width:1193px;height:45px;background:#1e1e1e"></div>
<svg style="left:866.400px;top:1170.5px" width="26" height="26" viewBox="0 0 26 26" fill="none" stroke="#b96c4a" stroke-width="3.300"><rect x="1.800" y="1.800" width="22.400" height="22.400" rx="3"/><path d="M10.400 9.600l-3.300 3.500 3.300 3.500M15.600 9.600l3.300 3.500-3.300 3.500" stroke="#ee8a52" stroke-width="2.500"/></svg>
<span class="t " style="left:1679.7px;top:1166.7px;font-size:25px;line-height:35px;color:#dedede;letter-spacing:1.560px;-webkit-text-stroke:0.85px;">script</span>
<span class="t " style="left:1812.9px;top:1166.7px;font-size:25px;line-height:35px;color:#9a9a9a;letter-spacing:0.769px;-webkit-text-stroke:0.85px;">(disk c...</span>
<span class="t " style="left:1980.7px;top:1166.7px;font-size:25px;line-height:35px;color:#dedede;letter-spacing:1.112px;-webkit-text-stroke:0.85px;">2 ms</span>
<div class="a" style="left:0;top:0;width:1300px;height:1196px;overflow:hidden"><span class="t " style="left:902.1px;top:504.8px;font-size:25px;line-height:35px;color:#dedede;letter-spacing:0.942px;-webkit-text-stroke:0.85px;">Inter-Regular.woff2</span><span class="t " style="left:902.8px;top:548.9px;font-size:25px;line-height:35px;color:#dedede;-webkit-text-stroke:0.85px;letter-spacing:0.993px;">me?tag=sanity.studio.users.get-current</span><span class="t " style="left:902.8px;top:593.0px;font-size:25px;line-height:35px;color:#dedede;letter-spacing:1.155px;-webkit-text-stroke:0.85px;">resources-jtKl49kz.mjs</span><span class="t " style="left:902.8px;top:637.2px;font-size:25px;line-height:35px;color:#dedede;letter-spacing:1.081px;-webkit-text-stroke:0.85px;">resources-KD6Wivk-.mjs</span><span class="t " style="left:902.8px;top:681.3px;font-size:25px;line-height:35px;color:#dedede;letter-spacing:0.891px;-webkit-text-stroke:0.85px;">resources-BahMtJuO.mjs</span><span class="t " style="left:902.8px;top:725.4px;font-size:25px;line-height:35px;color:#dedede;letter-spacing:1.175px;-webkit-text-stroke:0.85px;">resources-Dc-6ZcPg.mjs</span><span class="t " style="left:902.8px;top:769.6px;font-size:25px;line-height:35px;color:#dedede;letter-spacing:0.870px;-webkit-text-stroke:0.85px;">resources-DqxSuDsr.mjs</span><span class="t " style="left:902.8px;top:813.7px;font-size:25px;line-height:35px;color:#dedede;letter-spacing:0.947px;-webkit-text-stroke:0.85px;">resources-DnGa4L60.mjs</span><span class="t " style="left:902.8px;top:857.8px;font-size:25px;line-height:35px;color:#dedede;letter-spacing:1.011px;-webkit-text-stroke:0.85px;">resources-BmsyfWob.js</span><span class="t " style="left:902.8px;top:902.0px;font-size:25px;line-height:35px;color:#dedede;letter-spacing:0.578px;-webkit-text-stroke:0.85px;">resources-BQsCEzu1.mjs</span><span class="t " style="left:902.8px;top:946.1px;font-size:25px;line-height:35px;color:#dedede;letter-spacing:0.767px;-webkit-text-stroke:0.85px;">index.mjs</span><span class="t " style="left:903.4px;top:990.2px;font-size:25px;line-height:35px;color:#dedede;-webkit-text-stroke:0.85px;letter-spacing:0.881px;">announcements?tag=sanity.studio.announcements</span><span class="t " style="left:904.1px;top:1034.3px;font-size:25px;line-height:35px;color:#dedede;-webkit-text-stroke:0.85px;letter-spacing:0.871px;">features?tag=sanity.studio.features</span><span class="t " style="left:902.8px;top:1078.5px;font-size:25px;line-height:35px;color:#dedede;-webkit-text-stroke:0.85px;letter-spacing:0.951px;">production?limit=1&amp;tag=sanity.studio.releases</span><span class="t " style="left:902.7px;top:1122.6px;font-size:25px;line-height:35px;color:#dedede;-webkit-text-stroke:0.85px;letter-spacing:0.870px;">help?tag=sanity.studio.module.version</span><span class="t " style="left:902.8px;top:1166.7px;font-size:25px;line-height:35px;color:#dedede;letter-spacing:0.688px;-webkit-text-stroke:0.85px;">index-HJA33pT1.mjs</span></div>
<div class="a" style="left:855px;top:446px;width:1193px;height:55px;background:#28292a"></div>
<div class="a" style="left:855px;top:446px;width:511px;height:55px;background:#3d3e40"></div>
<div class="a" style="left:855px;top:501px;width:1193px;height:2px;background:#5e5e5e"></div>
<div class="a" style="left:1366px;top:446px;width:2px;height:55px;background:#5e5e5e"></div>
<div class="a" style="left:1430px;top:446px;width:2px;height:55px;background:#5e5e5e"></div>
<div class="a" style="left:1523px;top:446px;width:2px;height:55px;background:#5e5e5e"></div>
<div class="a" style="left:1670px;top:446px;width:2px;height:55px;background:#5e5e5e"></div>
<span class="t " style="left:864.4px;top:456.3px;font-size:25px;line-height:35px;color:#dedede;letter-spacing:0.542px;-webkit-text-stroke:0.85px;">Name</span>
<span class="t " style="left:1374.4px;top:458.8px;font-size:25px;line-height:35px;color:#dedede;-webkit-text-stroke:0.85px;">Method</span>
<span class="t " style="left:1439.3px;top:458.8px;font-size:25px;line-height:35px;color:#dedede;-webkit-text-stroke:0.85px;">Status</span>
<span class="t " style="left:1531.4px;top:458.8px;font-size:25px;line-height:35px;color:#dedede;-webkit-text-stroke:0.85px;">Protocol</span>
<span class="t " style="left:1679.9px;top:458.8px;font-size:25px;line-height:35px;color:#dedede;-webkit-text-stroke:0.85px;">Type</span>
<span class="t " style="left:1813.3px;top:456.3px;font-size:25px;line-height:35px;color:#dedede;letter-spacing:0.254px;-webkit-text-stroke:0.85px;">Size</span>
<span class="t " style="left:1945.9px;top:456.3px;font-size:25px;line-height:35px;color:#dedede;letter-spacing:0.732px;-webkit-text-stroke:0.85px;">Time</span>
<div class="a" style="left:854px;top:446px;width:2px;height:56px;background:#5a5a5a"></div>
<div class="a" style="left:1803px;top:446px;width:2px;height:750px;background:#5e5e5e"></div>
<div class="a" style="left:1935px;top:446px;width:2px;height:750px;background:#5e5e5e"></div>
<div class="a" style="left:2046px;top:0;width:2px;height:1196px;background:#2f3a2a"></div>
<div class="a" id="menu" style="left:1302px;top:465px;width:435px;height:760px;background:#342c2a;border-radius:13px;box-shadow:0 0 0 1.800px #0b0909, 0 10px 30px 2px rgba(0,0,0,.32);"></div>
<div class="a" style="left:1302px;top:465px;width:431px;height:760px;border:2px solid #696361;border-radius:13px;"></div>
<span class="t " style="left:1352.6px;top:481.8px;font-size:26.6px;line-height:37px;color:#7d7572;letter-spacing:0.920px;-webkit-text-stroke:0.950px;">Name</span>
<svg style="left:1321px;top:488px" width="22" height="22" viewBox="0 0 22 22" fill="none" stroke="#7d7572" stroke-width="3.200" stroke-linecap="round" stroke-linejoin="round"><path d="M2.300 12.900l6.400 6.500L19.600 4.300"/></svg>
<span class="t " style="left:1352.6px;top:528.8px;font-size:26.6px;line-height:37px;color:#ebe7e5;letter-spacing:1.180px;-webkit-text-stroke:0.950px;">Path</span>
<span class="t " style="left:1352.7px;top:574.8px;font-size:26.6px;line-height:37px;color:#ebe7e5;letter-spacing:-0.464px;-webkit-text-stroke:0.950px;">URL</span>
<div class="a" style="left:1332px;top:625px;width:376px;height:2px;background:#524a48"></div>
<span class="t " style="left:1352.6px;top:643.8px;font-size:26.6px;line-height:37px;color:#ebe7e5;letter-spacing:1.905px;-webkit-text-stroke:0.950px;">Method</span>
<svg style="left:1321px;top:650px" width="22" height="22" viewBox="0 0 22 22" fill="none" stroke="#ebe7e5" stroke-width="3.200" stroke-linecap="round" stroke-linejoin="round"><path d="M2.300 12.900l6.400 6.500L19.600 4.300"/></svg>
<span class="t " style="left:1353.6px;top:689.8px;font-size:26.6px;line-height:37px;color:#ebe7e5;letter-spacing:1.022px;-webkit-text-stroke:0.950px;">Status</span>
<svg style="left:1321px;top:696px" width="22" height="22" viewBox="0 0 22 22" fill="none" stroke="#ebe7e5" stroke-width="3.200" stroke-linecap="round" stroke-linejoin="round"><path d="M2.300 12.900l6.400 6.500L19.600 4.300"/></svg>
<span class="t " style="left:1352.6px;top:736.8px;font-size:26.6px;line-height:37px;color:#ebe7e5;letter-spacing:1.390px;-webkit-text-stroke:0.950px;">Protocol</span>
<svg style="left:1321px;top:743px" width="22" height="22" viewBox="0 0 22 22" fill="none" stroke="#ebe7e5" stroke-width="3.200" stroke-linecap="round" stroke-linejoin="round"><path d="M2.300 12.900l6.400 6.500L19.600 4.300"/></svg>
<span class="t " style="left:1353.6px;top:782.8px;font-size:26.6px;line-height:37px;color:#ebe7e5;letter-spacing:0.832px;-webkit-text-stroke:0.950px;">Scheme</span>
<span class="t " style="left:1352.6px;top:829.8px;font-size:26.6px;line-height:37px;color:#ebe7e5;letter-spacing:1.120px;-webkit-text-stroke:0.950px;">Domain</span>
<span class="t " style="left:1352.6px;top:875.8px;font-size:26.6px;line-height:37px;color:#ebe7e5;letter-spacing:0.872px;-webkit-text-stroke:0.950px;">Remote address</span>
<span class="t " style="left:1352.6px;top:921.8px;font-size:26.6px;line-height:37px;color:#ebe7e5;letter-spacing:0.852px;-webkit-text-stroke:0.950px;">Remote address space</span>
<span class="t " style="left:1354.2px;top:967.8px;font-size:26.6px;line-height:37px;color:#ebe7e5;letter-spacing:0.820px;-webkit-text-stroke:0.950px;">Type</span>
<svg style="left:1321px;top:974px" width="22" height="22" viewBox="0 0 22 22" fill="none" stroke="#ebe7e5" stroke-width="3.200" stroke-linecap="round" stroke-linejoin="round"><path d="M2.300 12.900l6.400 6.500L19.600 4.300"/></svg>
<span class="t " style="left:1352.3px;top:1013.8px;font-size:26.6px;line-height:37px;color:#ebe7e5;letter-spacing:1.127px;-webkit-text-stroke:0.950px;">Initiator</span>
<span class="t " style="left:1352.3px;top:1060.8px;font-size:26.6px;line-height:37px;color:#ebe7e5;letter-spacing:0.971px;-webkit-text-stroke:0.950px;">Initiator address space</span>
<span class="t " style="left:1353.4px;top:1106.8px;font-size:26.6px;line-height:37px;color:#ebe7e5;letter-spacing:0.760px;-webkit-text-stroke:0.950px;">Cookies</span>
<span class="t " style="left:1353.6px;top:1152.8px;font-size:26.6px;line-height:37px;color:#ebe7e5;letter-spacing:0.901px;-webkit-text-stroke:0.950px;">Set cookies</span>
<svg style="left:0;top:0" width="2048" height="1196" viewBox="0 0 2048 1196" fill="none">
<rect x="1413" y="0.700" width="222" height="69.600" rx="34.800" stroke="#ff2600" stroke-width="11.700"/>
<rect x="1295.300" y="724.500" width="440.600" height="67.200" rx="33.600" stroke="#ff2600" stroke-width="11.400"/>
<path d="M779 517.500C850 527 930 520 1002 495" stroke="#ff2600" stroke-width="10.500" stroke-linecap="butt"/>
<path d="M985.200 476.300L1042.600 481L1005.800 522.300Z" fill="#ff2600"/>
</svg>
</div>
</body></html>
